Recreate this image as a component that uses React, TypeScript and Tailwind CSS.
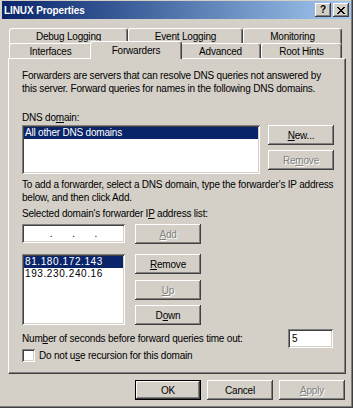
// App.tsx
// Cuadro de diálogo clásico "LINUX Properties" (pestaña Forwarders) al estilo Windows 2003.

const raised =
  "shadow-[inset_-1px_-1px_#404040,inset_1px_1px_#ffffff,inset_-2px_-2px_#808080,inset_2px_2px_#d4d0c8]";
const sunken =
  "shadow-[inset_1px_1px_#808080,inset_-1px_-1px_#ffffff,inset_2px_2px_#404040,inset_-2px_-2px_#d4d0c8]";
const disabledText = "text-[#808080] [text-shadow:1px_1px_0_#ffffff]";

// Botón 3D clásico
function Btn({
  children,
  disabled,
  width = "w-[66px]",
  isDefault,
}: {
  children: React.ReactNode;
  disabled?: boolean;
  width?: string;
  isDefault?: boolean;
}) {
  if (isDefault) {
    return (
      <div className={`${width} h-[20px] border border-black flex`}>
        <div className={`flex-1 flex items-center justify-center bg-[#d4d0c8] ${raised}`}>{children}</div>
      </div>
    );
  }
  return (
    <div
      className={`${width} h-[20px] flex items-center justify-center bg-[#d4d0c8] ${raised} ${
        disabled ? disabledText : ""
      }`}
    >
      {children}
    </div>
  );
}

// Pestaña inactiva
function Tab({ label, width }: { label: string; width: string }) {
  return (
    <div
      className={`${width} h-[16px] flex items-center justify-center border-t border-l border-white border-r border-r-[#404040] rounded-t-[3px] shadow-[inset_-1px_0_#808080] bg-[#d4d0c8]`}
    >
      {label}
    </div>
  );
}

export default function App() {
  return (
    <div className="w-[353px] h-[408px] bg-[#d4d0c8] overflow-hidden font-['Liberation_Sans',Arial,sans-serif] text-[10px] tracking-[-0.2px] leading-[13px] text-black whitespace-nowrap pt-[1px] px-[2px] shadow-[inset_-1px_-1px_#404040,inset_-2px_-2px_#808080]">
      {/* Barra de título */}
      <div className="h-[18px] flex items-center justify-between bg-linear-to-r from-[#0a246a] to-[#a6caf0] pl-[2px] pr-[2px]">
        <span className="text-white font-bold text-[10px] tracking-[-0.1px]">LINUX Properties</span>
        <div className="flex gap-[2px]">
          <div className={`w-[16px] h-[14px] bg-[#d4d0c8] ${raised} flex items-center justify-center font-bold text-[10px] leading-none`}>
            ?
          </div>
          <div className={`w-[16px] h-[14px] bg-[#d4d0c8] ${raised} flex items-center justify-center`}>
            <svg width="8" height="7" viewBox="0 0 8 7">
              <path d="M0 0 L7 7 M1 0 L8 7 M7 0 L0 7 M8 0 L1 7" stroke="#000" strokeWidth="1" />
            </svg>
          </div>
        </div>
      </div>

      {/* Pestañas */}
      <div className="mt-[9px] ml-[7px]">
        <div className="flex h-[15px]">
          <Tab label="Debug Logging" width="w-[119px]" />
          <Tab label="Event Logging" width="w-[115px]" />
          <Tab label="Monitoring" width="w-[99px]" />
        </div>
        <div className="flex h-[15px] items-start">
          <Tab label="Interfaces" width="w-[83px]" />
          <div className="relative z-10 w-[92px] h-[18px] -mt-[2px] -mx-[2px] flex items-start justify-center pt-[2px] border-t border-l border-white border-r border-r-[#404040] rounded-t-[3px] shadow-[inset_-1px_0_#808080] bg-[#d4d0c8]">
            Forwarders
          </div>
          <Tab label="Advanced" width="w-[81px]" />
          <Tab label="Root Hints" width="w-[81px]" />
        </div>
      </div>

      {/* Panel de la pestaña */}
      <div className="relative ml-[6px] w-[338px] h-[316px] pl-[13px] pt-[10px] border-t border-l border-white border-r border-b border-r-[#404040] border-b-[#404040] shadow-[inset_-1px_-1px_#808080]">
        <p>
          Forwarders are servers that can resolve DNS queries not answered by
          <br />
          this server. Forward queries for names in the following DNS domains.
        </p>

        <p className="mt-[16px]">
          DNS do<u>m</u>ain:
        </p>
        <div className="mt-[1px] flex gap-[8px]">
          <div className={`w-[238px] h-[49px] bg-white ${sunken} p-[2px]`}>
            <div className="h-[12px] bg-[#0a246a] text-white pl-[1px] leading-[12px]">All other DNS domains</div>
          </div>
          <div className="flex flex-col gap-[5px]">
            <Btn>
              <span>
                <u>N</u>ew...
              </span>
            </Btn>
            <Btn disabled>
              <span>
                Re<u>m</u>ove
              </span>
            </Btn>
          </div>
        </div>

        <p className="mt-[4px]">
          To add a forwarder, select a DNS domain, type the forwarder's IP address
          <br />
          below, and then click Add.
        </p>

        <p className="mt-[3px]">
          Selected domain's forwarder I<u>P</u> address list:
        </p>

        <div className="mt-[4px] flex gap-[10px] items-start">
          <div className={`w-[103px] h-[19px] bg-white ${sunken} flex items-center justify-around px-[18px]`}>
            <span>.</span>
            <span>.</span>
            <span>.</span>
          </div>
          <Btn disabled>
            <span>
              <u>A</u>dd
            </span>
          </Btn>
        </div>

        <div className="mt-[10px] flex gap-[10px] items-start">
          <div className={`w-[103px] h-[71px] bg-white ${sunken} p-[2px] tracking-[0.6px]`}>
            <div className="h-[12px] bg-[#0a246a] text-white pl-[1px] leading-[12px]">81.180.172.143</div>
            <div className="h-[12px] pl-[1px] leading-[12px]">193.230.240.16</div>
          </div>
          <div className="flex flex-col gap-[5px]">
            <Btn>
              <span>
                <u>R</u>emove
              </span>
            </Btn>
            <div className="mt-[1px]">
              <Btn disabled>
                <span>
                  <u>U</u>p
                </span>
              </Btn>
            </div>
            <Btn>
              <span>
                D<u>o</u>wn
              </span>
            </Btn>
          </div>
        </div>

        <div className="mt-[4px] flex items-center justify-between pr-[12px]">
          <span>
            Num<u>b</u>er of seconds before forward queries time out:
          </span>
          <div className={`w-[45px] h-[19px] bg-white ${sunken} flex items-center pl-[4px]`}>5</div>
        </div>

        <div className="mt-[1px] flex items-center gap-[4px]">
          <div className={`w-[13px] h-[13px] bg-white ${sunken}`} />
          <span>
            Do not u<u>s</u>e recursion for this domain
          </span>
        </div>
      </div>

      {/* Botones inferiores */}
      <div className="mt-[6px] flex justify-end gap-[6px] pr-[6px]">
        <Btn isDefault>OK</Btn>
        <Btn>Cancel</Btn>
        <Btn disabled>
          <span>
            <u>A</u>pply
          </span>
        </Btn>
      </div>
    </div>
  );
}
